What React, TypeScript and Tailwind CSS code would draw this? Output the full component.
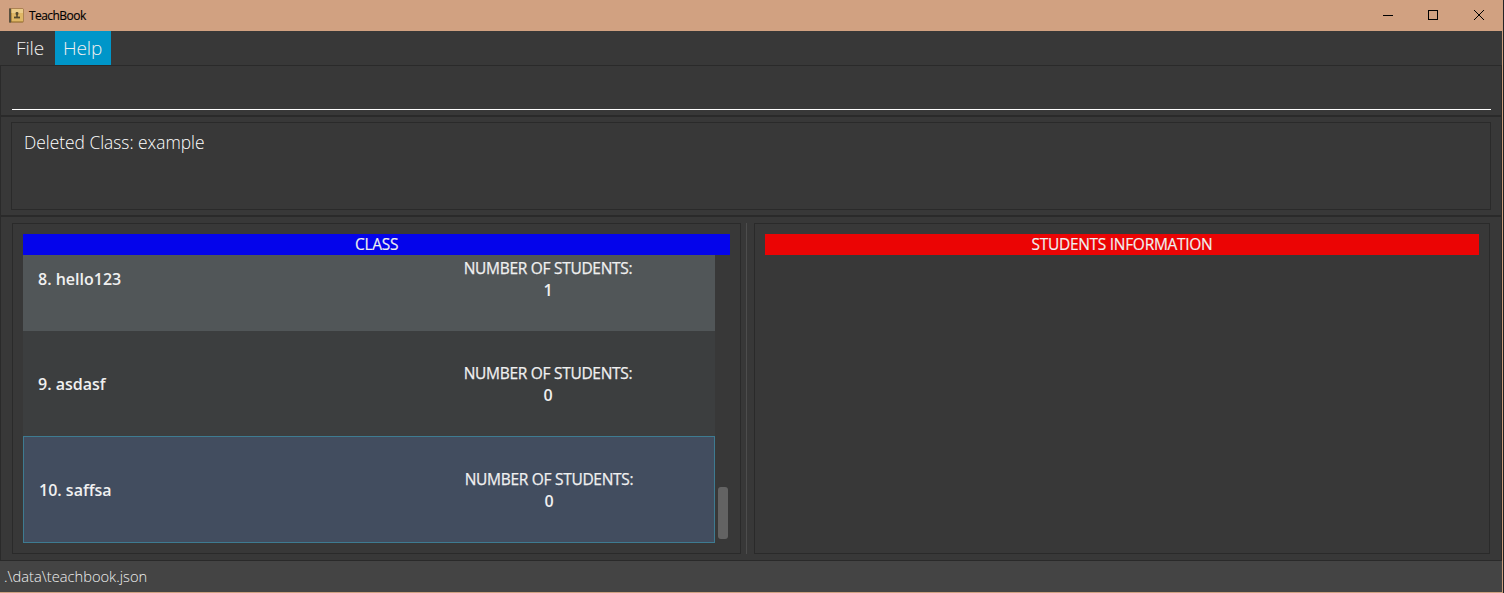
type ClassEntry = { index: number; name: string; students: number };

const classes: ClassEntry[] = [
  { index: 8, name: "hello123", students: 1 },
  { index: 9, name: "asdasf", students: 0 },
  { index: 10, name: "saffsa", students: 0 },
];

const rowStyles = [
  "h-[105px] bg-[#515658]",
  "h-[105px] bg-[#3c3e3f]",
  "h-[107px] border border-[#3e7b91] bg-[#424d5f]",
];

function BookIcon() {
  return (
    <svg width="15" height="15" viewBox="0 0 15 15">
      <rect x="0" y="0.5" width="14.5" height="14" rx="1" fill="#8a6425" />
      <rect x="0" y="0.5" width="2" height="14" fill="#5b5140" />
      <rect x="2.5" y="1" width="11.5" height="12.5" fill="#dfb766" />
      <rect x="2.5" y="1" width="11.5" height="4" fill="#ebcb88" />
      <rect x="6.6" y="4" width="2.8" height="3" rx="1" fill="#574a2e" />
      <rect x="7.2" y="6" width="1.6" height="3" fill="#574a2e" />
      <rect x="5" y="8.6" width="6" height="1.8" fill="#574a2e" />
    </svg>
  );
}

function TitleBar() {
  return (
    <header className="flex h-[31px] shrink-0 items-center bg-[#d1a181] pl-[9px] text-black">
      <BookIcon />
      <span className="ml-[5px] pt-px text-[12px] leading-4 tracking-[-0.55px] [-webkit-text-stroke:0.15px_black]">
        TeachBook
      </span>
      <div className="ml-auto flex items-center pr-[18px]">
        <svg width="102" height="11" viewBox="0 0 102 11" fill="none" stroke="black">
          <path d="M0 5.5H10" />
          <rect x="45.5" y="0.5" width="9" height="9" />
          <path d="M91 0L101 10M101 0L91 10" />
        </svg>
      </div>
    </header>
  );
}

function ClassRow({ entry, style }: { entry: ClassEntry; style: string }) {
  return (
    <li className={`flex shrink-0 items-center pl-[15px] text-[16px] font-semibold text-[#f0f0f0] ${style}`}>
      <span className="w-[387px]">
        {entry.index}. {entry.name}
      </span>
      <div className="flex w-[246px] flex-col items-center leading-[22px]">
        <span className="text-[15.5px] font-normal tracking-[-0.3px] whitespace-nowrap [-webkit-text-stroke:0.25px_#f0f0f0]">
          NUMBER OF STUDENTS:
        </span>
        <span>{entry.students}</span>
      </div>
    </li>
  );
}

export default function App() {
  return (
    <div className="flex h-[593px] w-[1504px] overflow-hidden border-r border-[#242424] bg-[#383838] font-['Open_Sans',sans-serif]">
      <div className="flex w-full flex-col border-b border-[#d1a181]">
        <TitleBar />
        <div className="flex min-h-0 flex-1 flex-col border-r border-[#d1a181]">
          <nav className="flex h-[34px] shrink-0 text-[19px] leading-[34px] font-light tracking-[-0.15px] text-[#f0f0f0]">
            <span className="w-[55px] pl-4">File</span>
            <span className="w-[56px] bg-[#0096c9] pl-2">Help</span>
          </nav>
          <section className="h-[51px] shrink-0 border border-[#2a2a2a] pt-[20px] pr-[10px] pl-[11px]">
            <div className="h-6 border-b border-white" />
          </section>
          <section className="h-[100px] shrink-0 border border-[#2a2a2a] px-[10px] py-[5px]">
            <div className="h-[88px] border border-[#2a2a2a] pt-[7px] pl-3 text-[17.35px] leading-6 font-light text-white">
              Deleted Class: example
            </div>
          </section>
          <main className="flex h-[345px] shrink-0 border border-[#2a2a2a] px-[11px] py-[6px]">
            <section className="flex h-[331px] w-[729px] flex-col border border-[#2a2a2a] px-[10px] pt-[10px]">
              <h2 className="h-[21px] shrink-0 bg-[#0404eb] text-center text-[15.5px] leading-[21px] font-normal tracking-[-0.3px] text-[#f0f0f0] [-webkit-text-stroke:0.15px_#f0f0f0]">
                CLASS
              </h2>
              <div className="flex h-[288px]">
                <ul className="flex w-[692px] flex-col justify-end overflow-hidden">
                  {classes.map((entry, i) => (
                    <ClassRow key={entry.index} entry={entry} style={rowStyles[i]} />
                  ))}
                </ul>
                <div className="flex flex-1 flex-col justify-end pb-1 pl-[3px]">
                  <div className="h-[52px] w-[10px] rounded-[3px] bg-[#636363]" />
                </div>
              </div>
            </section>
            <div className="mr-[7px] ml-[5px] h-[331px] w-px bg-[#4d4d4d]" />
            <section className="h-[331px] w-[736px] border border-[#2a2a2a] px-[10px] pt-[10px]">
              <h2 className="h-[21px] bg-[#eb0404] text-center text-[15.5px] leading-[21px] font-normal tracking-[-0.3px] text-[#f0f0f0] [-webkit-text-stroke:0.15px_#f0f0f0]">
                STUDENTS INFORMATION
              </h2>
            </section>
          </main>
          <footer className="flex-1 bg-[#444444] pl-1 text-[14.7px] leading-[31px] font-light text-[#f0f0f0]">
            .\data\teachbook.json
          </footer>
        </div>
      </div>
    </div>
  );
}
